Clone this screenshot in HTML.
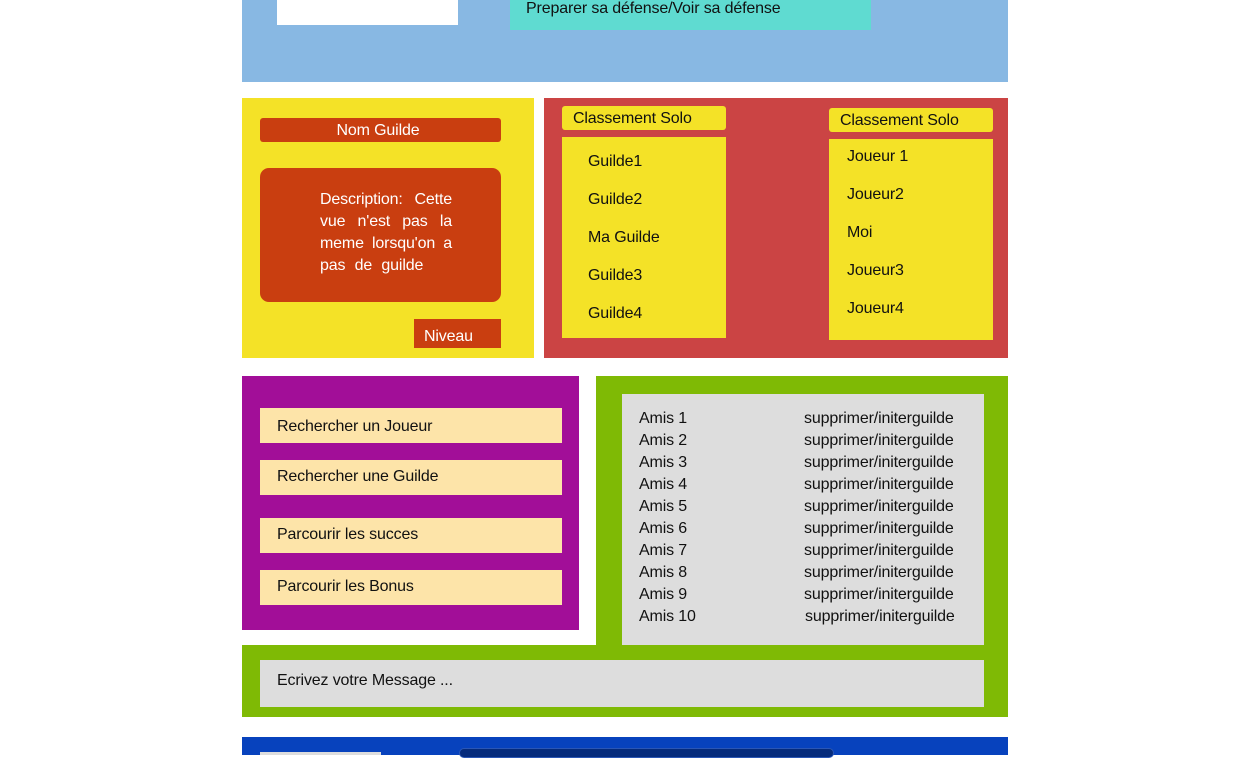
<!DOCTYPE html>
<html><head><meta charset="utf-8"><style>
body{margin:0;width:1236px;height:755px;overflow:hidden;background:#fff;font-family:"Liberation Sans",sans-serif;font-size:16px;letter-spacing:-0.15px;color:#111;position:relative}
div{position:absolute;box-sizing:border-box}
.t{white-space:nowrap}
</style></head><body>
<div style="left:242px;top:0;width:766px;height:82px;background:#88b8e3"></div>
<div style="left:277px;top:0;width:181px;height:25px;background:#fff"></div>
<div style="left:510px;top:0;width:361px;height:30px;background:#5fdbd1"></div>
<div class="t" style="left:526px;top:0px;">Preparer sa défense/Voir sa défense</div>

<div style="left:242px;top:98px;width:292px;height:260px;background:#f4e227"></div>
<div style="left:260px;top:118px;width:241px;height:24px;background:#c93e10;border-radius:3px;color:#fff;text-align:center;line-height:26px;padding-right:5px">Nom Guilde</div>
<div style="left:260px;top:168px;width:241px;height:134px;background:#c93e10;border-radius:9px"></div>
<div style="left:320px;top:189px;width:132px;color:#fff;line-height:22px;text-align:justify">Description: Cette vue n'est pas la meme lorsqu'on a <span style="word-spacing:5px">pas de guilde</span></div>
<div style="left:414px;top:319px;width:87px;height:29px;background:#c93e10;color:#fff;padding-left:10px;line-height:35px">Niveau</div>

<div style="left:544px;top:98px;width:464px;height:260px;background:#cb4444"></div>
<div style="left:562px;top:106px;width:164px;height:24px;background:#f4e227;border-radius:3px;padding-left:11px;line-height:26px">Classement Solo</div>
<div style="left:562px;top:137px;width:164px;height:201px;background:#f4e227"></div>
<div class="t" style="left:588px;top:143px;line-height:38px">Guilde1<br>Guilde2<br>Ma Guilde<br>Guilde3<br>Guilde4</div>
<div style="left:829px;top:108px;width:164px;height:24px;background:#f4e227;border-radius:3px;padding-left:11px;line-height:26px">Classement Solo</div>
<div style="left:829px;top:139px;width:164px;height:201px;background:#f4e227"></div>
<div class="t" style="left:847px;top:138px;line-height:38px">Joueur 1<br>Joueur2<br>Moi<br>Joueur3<br>Joueur4</div>

<div style="left:242px;top:376px;width:337px;height:254px;background:#a20e98"></div>
<div style="left:260px;top:408px;width:302px;height:35px;background:#fde4a9;padding-left:17px;line-height:38px">Rechercher un Joueur</div>
<div style="left:260px;top:460px;width:302px;height:35px;background:#fde4a9;padding-left:17px;line-height:34px">Rechercher une Guilde</div>
<div style="left:260px;top:518px;width:302px;height:35px;background:#fde4a9;padding-left:17px;line-height:34px">Parcourir les succes</div>
<div style="left:260px;top:570px;width:302px;height:35px;background:#fde4a9;padding-left:17px;line-height:34px">Parcourir les Bonus</div>

<div style="left:596px;top:376px;width:412px;height:270px;background:#7fba05"></div>
<div style="left:242px;top:645px;width:766px;height:72px;background:#7fba05"></div>
<div style="left:622px;top:394px;width:362px;height:251px;background:#dddddd"></div>
<div class="t" style="left:639px;top:408px;line-height:22px">Amis 1<br>Amis 2<br>Amis 3<br>Amis 4<br>Amis 5<br>Amis 6<br>Amis 7<br>Amis 8<br>Amis 9<br>Amis 10</div>
<div class="t" style="left:804px;top:408px;line-height:22px">supprimer/initerguilde<br>supprimer/initerguilde<br>supprimer/initerguilde<br>supprimer/initerguilde<br>supprimer/initerguilde<br>supprimer/initerguilde<br>supprimer/initerguilde<br>supprimer/initerguilde<br>supprimer/initerguilde<br><span style="margin-left:1px">supprimer/initerguilde</span></div>
<div style="left:260px;top:660px;width:724px;height:47px;background:#dddddd;padding-left:17px;line-height:41px">Ecrivez votre Message ...</div>

<div style="left:242px;top:737px;width:766px;height:18px;background:#0742bd"></div>
<div style="left:260px;top:752px;width:121px;height:3px;background:#ddd"></div>
<div style="left:459px;top:748px;width:375px;height:10px;background:#052b7c;border-radius:5px;border:1px solid #2a56b5"></div>
</body></html>
